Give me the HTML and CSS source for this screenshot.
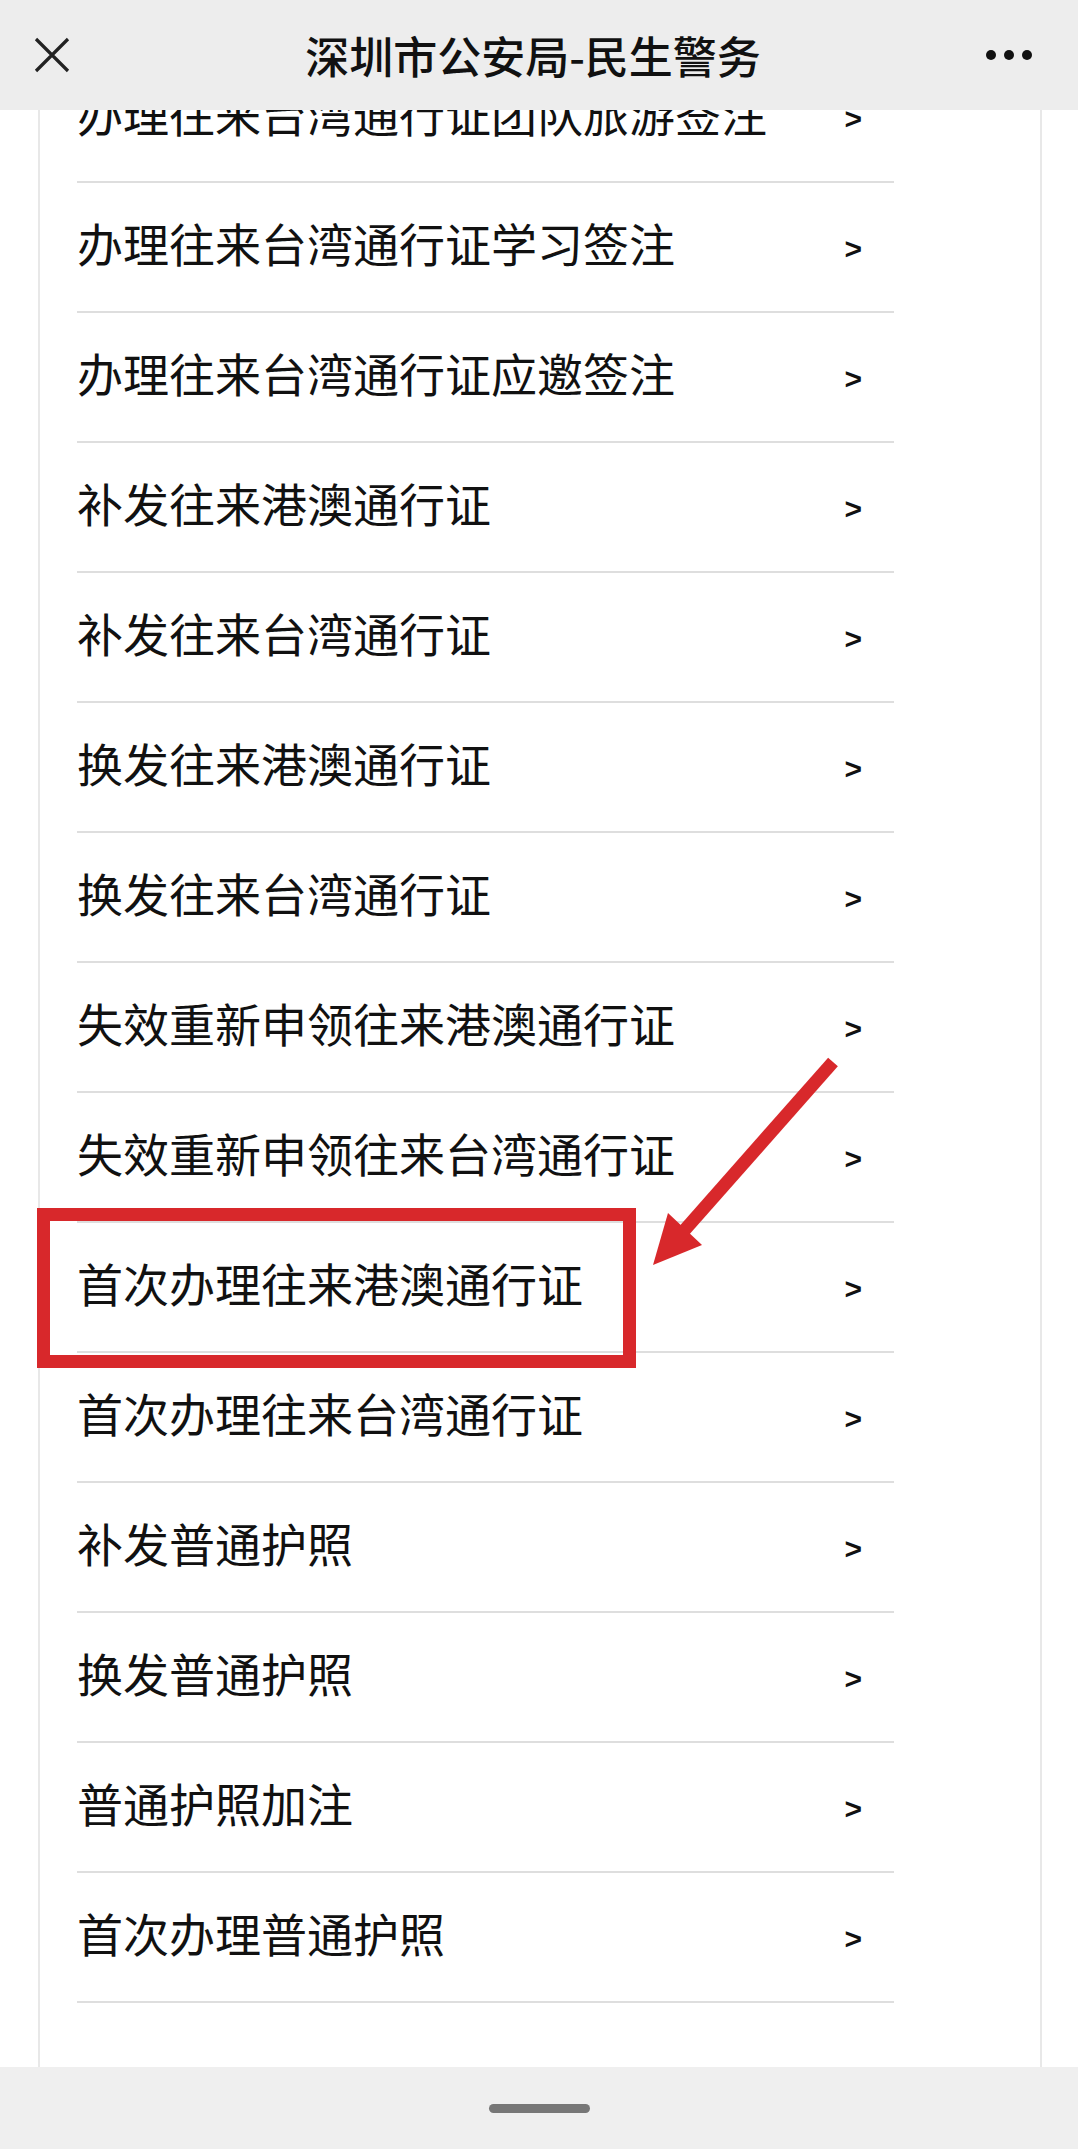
FILE: index.html
```html
<!DOCTYPE html>
<html lang="zh-CN">
<head>
  <meta charset="UTF-8">
  <meta name="viewport" content="width=device-width, initial-scale=1.0">
  <title>深圳市公安局-民生警务</title>
  <link rel="stylesheet" href="styles.css">
</head>
<body>

  <!-- 顶部导航栏 -->
  <div class="topbar">
    <svg class="close-icon" width="36" height="36" viewBox="0 0 36 36">
      <path d="M2 2 L34 34 M34 2 L2 34" stroke="#222" stroke-width="3.2" fill="none" />
    </svg>
    <h1 class="title">深圳市公安局-民生警务</h1>
    <div class="more">
      <span></span><span></span><span></span>
    </div>
  </div>

  <!-- 业务列表 -->
  <div class="card">
    <ul class="list">
      <li class="row"><span class="label">办理往来台湾通行证团队旅游签注</span><span class="chevron">&gt;</span></li>
      <li class="row"><span class="label">办理往来台湾通行证学习签注</span><span class="chevron">&gt;</span></li>
      <li class="row"><span class="label">办理往来台湾通行证应邀签注</span><span class="chevron">&gt;</span></li>
      <li class="row"><span class="label">补发往来港澳通行证</span><span class="chevron">&gt;</span></li>
      <li class="row"><span class="label">补发往来台湾通行证</span><span class="chevron">&gt;</span></li>
      <li class="row"><span class="label">换发往来港澳通行证</span><span class="chevron">&gt;</span></li>
      <li class="row"><span class="label">换发往来台湾通行证</span><span class="chevron">&gt;</span></li>
      <li class="row"><span class="label">失效重新申领往来港澳通行证</span><span class="chevron">&gt;</span></li>
      <li class="row"><span class="label">失效重新申领往来台湾通行证</span><span class="chevron">&gt;</span></li>
      <li class="row highlight">
        <span class="label">首次办理往来港澳通行证</span><span class="chevron">&gt;</span>
        <!-- 红框和箭头 -->
        <div class="mark"></div>
        <svg class="arrow" width="210" height="230" viewBox="0 0 210 230">
          <line x1="193" y1="12" x2="42" y2="183" stroke="#d8282b" stroke-width="13" />
          <polygon points="13,215 28,163 62,195" fill="#d8282b" />
        </svg>
      </li>
      <li class="row"><span class="label">首次办理往来台湾通行证</span><span class="chevron">&gt;</span></li>
      <li class="row"><span class="label">补发普通护照</span><span class="chevron">&gt;</span></li>
      <li class="row"><span class="label">换发普通护照</span><span class="chevron">&gt;</span></li>
      <li class="row"><span class="label">普通护照加注</span><span class="chevron">&gt;</span></li>
      <li class="row"><span class="label">首次办理普通护照</span><span class="chevron">&gt;</span></li>
    </ul>
  </div>

  <!-- 底部 -->
  <div class="bottombar">
    <div class="home-indicator"></div>
  </div>

</body>
</html>
```

FILE: styles.css
```css
/* 全体 */
body {
  margin: 0;
  padding: 0;
  background-color: #fff;
  font-family: "Noto Sans CJK SC", "Noto Sans", sans-serif;
  color: #111;
}

/* 顶部导航栏 */
.topbar {
  position: fixed;
  top: 0;
  left: 0;
  right: 0;
  height: 110px;
  background-color: #ededed;
  display: grid;
  grid-template-columns: 1fr auto 1fr;
  align-items: center;
  padding: 0 46px 0 34px;
  z-index: 10;
}

.close-icon {
  justify-self: start;
}

.title {
  margin: 0;
  font-size: 44px;
  font-weight: 500;
  color: #111;
}

.more {
  justify-self: end;
  display: flex;
  gap: 8px;
}

.more span {
  width: 10px;
  height: 10px;
  border-radius: 50%;
  background-color: #111;
}

/* 列表卡片 */
.card {
  margin: 0 36px 0 38px;
  min-height: 2149px;
  box-sizing: border-box;
  border-left: 2px solid #e8e8e8;
  border-right: 2px solid #e8e8e8;
  padding-top: 53px;
}

.list {
  list-style: none;
  margin: 0;
  padding: 0 0 0 37px;
  width: 817px;
}

.row {
  position: relative;
  height: 130px;
  box-sizing: border-box;
  border-bottom: 2px solid #dedede;
  display: flex;
  align-items: center;
  justify-content: space-between;
  padding: 0 32px 10px 0;
}

.label {
  font-size: 46px;
  line-height: 1;
  color: #111;
}

.chevron {
  font-family: "Liberation Sans", Arial, sans-serif;
  font-size: 30px;
  font-weight: bold;
  line-height: 1;
  color: #111;
  margin-top: 14px;
}

/* 强调标记 */
.mark {
  position: absolute;
  left: -40px;
  top: -15px;
  width: 599px;
  height: 160px;
  box-sizing: border-box;
  border: 13px solid #d8282b;
}

.arrow {
  position: absolute;
  left: 563px;
  top: -173px;
}

/* 底部 */
.bottombar {
  position: fixed;
  left: 0;
  right: 0;
  bottom: 0;
  height: 82px;
  background-color: #efefef;
  display: flex;
  justify-content: center;
  z-index: 10;
}

.home-indicator {
  width: 101px;
  height: 9px;
  border-radius: 5px;
  background-color: #777;
  margin-top: 37px;
}
```
